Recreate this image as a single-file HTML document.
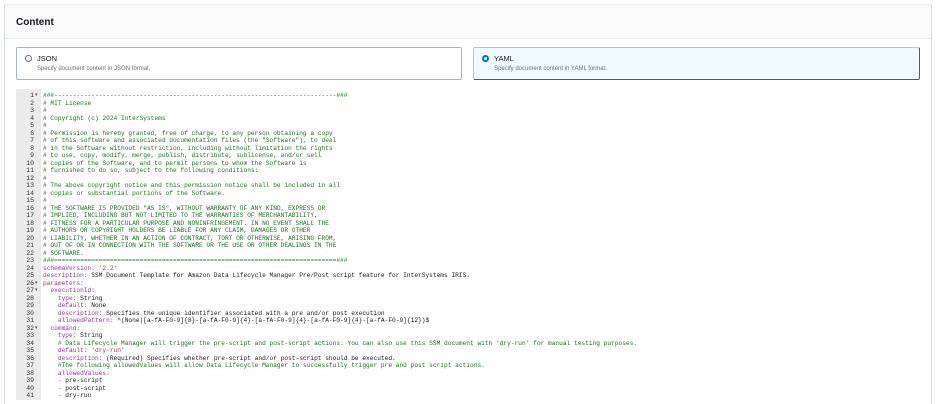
<!DOCTYPE html>
<html><head><meta charset="utf-8"><style>
*{margin:0;padding:0;box-sizing:border-box}
body{width:936px;height:400px;overflow:hidden;background:#fff;font-family:"Liberation Sans",sans-serif;position:relative}
.panel{position:absolute;left:4px;top:4px;width:928px;height:400px;border-left:1px solid #d5dbdb;border-right:1px solid #d5dbdb;border-top:1px solid #eaeded}
.hdr{height:34px;background:#fafafa;border-bottom:1px solid #eaeded;padding:12px 11px;font-weight:bold;font-size:10px;color:#16191f}
.card{position:absolute;top:47px;height:33px;border:1px solid #aab7b8;border-radius:2px;padding:6px 0 0 20px;font-size:7.5px;color:#16191f}
.card b{font-weight:normal}
.card .d{font-size:6px;color:#687078;margin-top:3px}
.r{position:absolute;left:8px;top:7px;width:7px;height:7px;border-radius:50%;border:1px solid #687078}
.sel{background:#f1faff;border-color:#0073bb;border-top-color:#a8c8dc;border-left-color:#a8c8dc}
.sel .r{border:2px solid #0073bb}
.ed{position:absolute;left:16px;top:89px;width:914px;height:311px}
.gut{position:absolute;left:0;top:0;width:25px;height:311px;background:#ebebeb}
pre{position:absolute;top:3px;font-family:"Liberation Mono",monospace;font-size:6.2px;line-height:7.5px;color:#16191f}
.nums{left:0;width:18px;text-align:right;color:#333;font-size:6.5px}
.fold{left:19px;color:#555;font-size:5px}
.code{left:27px}
.c{color:#236e25}.k{color:#8b3a96}.s{color:#a33}
</style></head><body>
<div class="panel"><div class="hdr">Content</div></div>
<div class="card" style="left:16px;width:446px"><div class="r"></div><b>JSON</b><div class="d">Specify document content in JSON format.</div></div>
<div class="card sel" style="left:473px;width:447px"><div class="r"></div><b>YAML</b><div class="d">Specify document content in YAML format.</div></div>
<div class="ed"><div class="gut"></div>
<pre class="nums">1
2
3
4
5
6
7
8
9
10
11
12
13
14
15
16
17
18
19
20
21
22
23
24
25
26
27
28
29
30
31
32
33
34
35
36
37
38
39
40
41</pre>
<pre class="fold">▾
























▾
▾




▾</pre>
<pre class="code"><span class="c">###----------------------------------------------------------------------------###
# MIT License
#
# Copyright (c) 2024 InterSystems
#
# Permission is hereby granted, free of charge, to any person obtaining a copy
# of this software and associated documentation files (the "Software"), to deal
# in the Software without restriction, including without limitation the rights
# to use, copy, modify, merge, publish, distribute, sublicense, and/or sell
# copies of the Software, and to permit persons to whom the Software is
# furnished to do so, subject to the following conditions:
#
# The above copyright notice and this permission notice shall be included in all
# copies or substantial portions of the Software.
#
# THE SOFTWARE IS PROVIDED "AS IS", WITHOUT WARRANTY OF ANY KIND, EXPRESS OR
# IMPLIED, INCLUDING BUT NOT LIMITED TO THE WARRANTIES OF MERCHANTABILITY,
# FITNESS FOR A PARTICULAR PURPOSE AND NONINFRINGEMENT. IN NO EVENT SHALL THE
# AUTHORS OR COPYRIGHT HOLDERS BE LIABLE FOR ANY CLAIM, DAMAGES OR OTHER
# LIABILITY, WHETHER IN AN ACTION OF CONTRACT, TORT OR OTHERWISE, ARISING FROM,
# OUT OF OR IN CONNECTION WITH THE SOFTWARE OR THE USE OR OTHER DEALINGS IN THE
# SOFTWARE.
###============================================================================###</span>
<span class="k">schemaVersion:</span> <span class="s">'2.2'</span>
<span class="k">description:</span> SSM Document Template for Amazon Data Lifecycle Manager Pre/Post script feature for InterSystems IRIS.
<span class="k">parameters:</span>
  <span class="k">executionId:</span>
    <span class="k">type:</span> String
    <span class="k">default:</span> None
    <span class="k">description:</span> Specifies the unique identifier associated with a pre and/or post execution
    <span class="k">allowedPattern:</span> ^(None|[a-fA-F0-9]{8}-[a-fA-F0-9]{4}-[a-fA-F0-9]{4}-[a-fA-F0-9]{4}-[a-fA-F0-9]{12})$
  <span class="k">command:</span>
    <span class="k">type:</span> String
    <span class="c"># Data Lifecycle Manager will trigger the pre-script and post-script actions. You can also use this SSM document with 'dry-run' for manual testing purposes.</span>
    <span class="k">default:</span> <span class="s">'dry-run'</span>
    <span class="k">description:</span> (Required) Specifies whether pre-script and/or post-script should be executed.
    <span class="c">#The following allowedValues will allow Data Lifecycle Manager to successfully trigger pre and post script actions.</span>
    <span class="k">allowedValues:</span>
    <span class="k">-</span> pre-script
    <span class="k">-</span> post-script
    <span class="k">-</span> dry-run</pre>
</div>
</body></html>
